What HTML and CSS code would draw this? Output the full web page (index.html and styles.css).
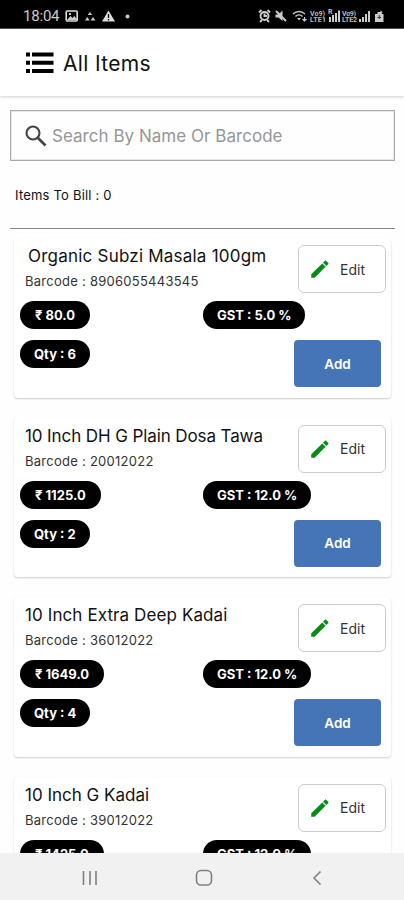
FILE: index.html
```
<!DOCTYPE html>
<html lang="en">
<head>
<meta charset="utf-8">
<title>All Items</title>
<link rel="stylesheet" href="styles.css">
</head>
<body>
<svg class="defs" aria-hidden="true">
  <symbol id="pencil" viewBox="0 0 20 20"><path d="M1.500 18.500v-3.300L12.300 4.800l3 3L4.700 18.500zM13.300 3.700l1.500-1.500c.5-.5 1-.5 1.500 0l1.600 1.600c.5.5.5 1 0 1.500l-1.500 1.500z" stroke="#078a16" stroke-width=".5" stroke-linejoin="round"/></symbol>
</svg>
<div class="phone">
  <div class="status">
    <span class="time">18:04</span>
    <svg class="left-icons" width="70" height="14" viewBox="0 0 70 14">
      <rect x="1.200" y="2" width="11" height="10" rx="1" fill="none" stroke="#ddd" stroke-width="1.600"/>
      <path d="M2 11l3.500-4 2 2 2-2 3 4zM4 4h2v2H4zM20 11.500l2.200-3.500 2.500 3.500zM22.700 6l2.200-3 2.200 3zM25.500 11.500L28 8l2.500 3.500z" fill="#ccc"/>
      <path d="M43.500 1.500l6.500 11H37z" fill="#ddd"/>
      <path d="M43.500 5v4M43.500 10v1.500" stroke="#111" stroke-width="1.300"/>
      <circle cx="62.500" cy="7.500" r="2" fill="#ccc"/>
    </svg>
    <svg class="right-icons" width="128" height="16" viewBox="0 0 128 16">
      <g fill="none" stroke="#ccc" stroke-width="1.900">
        <circle cx="6.500" cy="8" r="4"/><path d="M1 4.500L3.500 2M12 4.500L9.500 2M2 14l2-2M11 14l-2-2M6.500 5.500V8H9"/>
        <path d="M18 3l10 10"/>
        <path d="M35 6c3.500-3.300 8.500-3.300 12 0M37.500 8.500c2-2 5-2 7 0" stroke-width="1.500"/>
        <path d="M46.500 9v4M44.500 11l2 2 2-2" stroke-width="1.200"/>
      </g>
      <path d="M17.500 6.500h3l4-4V13l-4-3.500h-3zM39 10h4l-2 2.500zM71 9h2v5h-2zM74 7h2v7h-2zM77 5h2v9h-2zM80 2.500h2V14h-2zM101 11h2v3h-2zM104 9h2v5h-2zM107 6h2v8h-2zM110 3h2v11h-2z" fill="#ccc"/>
      <g class="tiny"><text x="52" y="7.500" textLength="15">Vo9)</text><text x="52" y="14" textLength="16">LTE1</text><text x="70" y="6">R</text><text x="84" y="7.500" textLength="14">Vo9)</text><text x="84" y="14" textLength="15">LTE2</text></g>
      <path d="M117 6h2.500V4h3V2.500l2 1.500-1 2h2v8H117z" fill="#ccc"/><path d="M121.300 7v4M119.500 9.500h3.500" stroke="#333"/>
    </svg>
  </div>
  <header class="appbar">
    <svg width="28" height="22" viewBox="0 0 28 22"><path d="M0 .5h4v4H0zM6 .5h21.500v4H6zM0 8.800h4v4H0zM6 8.800h21.500v4H6zM0 17h4v4H0zM6 17h21.500v4H6z"/></svg>
    <h1><span>All Items</span></h1>
  </header>
  <main>
    <div class="search">
      <svg width="22" height="22" viewBox="0 0 22 22" fill="none" stroke="#444"><circle cx="8" cy="8" r="6.500" stroke-width="2.100"/><path d="M12.500 12.500l8 8" stroke-width="2.600"/></svg>
      <span>Search By Name Or Barcode</span>
    </div>
    <p class="bill"><span>Items To Bill : 0</span></p>
    <section class="list">
      <article class="card">
        <div class="info"><h2 class="inset"><span>Organic Subzi Masala 100gm</span></h2><p class="code"><span>Barcode : 8906055443545</span></p></div>
        <button class="edit"><svg><use href="#pencil"/></svg><span>Edit</span></button>
        <div class="pills"><b>₹ 80.0</b><b class="gst">GST : 5.0 %</b></div>
        <div class="pills qty"><b>Qty : 6</b></div>
        <button class="add">Add</button>
      </article>
      <article class="card">
        <div class="info"><h2 class="tight"><span>10 Inch DH G Plain Dosa Tawa</span></h2><p class="code"><span>Barcode : 20012022</span></p></div>
        <button class="edit"><svg><use href="#pencil"/></svg><span>Edit</span></button>
        <div class="pills"><b>₹ 1125.0</b><b class="gst">GST : 12.0 %</b></div>
        <div class="pills qty"><b>Qty : 2</b></div>
        <button class="add">Add</button>
      </article>
      <article class="card">
        <div class="info"><h2 class="loose"><span>10 Inch Extra Deep Kadai</span></h2><p class="code"><span>Barcode : 36012022</span></p></div>
        <button class="edit"><svg><use href="#pencil"/></svg><span>Edit</span></button>
        <div class="pills"><b>₹ 1649.0</b><b class="gst">GST : 12.0 %</b></div>
        <div class="pills qty"><b>Qty : 4</b></div>
        <button class="add">Add</button>
      </article>
      <article class="card">
        <div class="info"><h2><span>10 Inch G Kadai</span></h2><p class="code"><span>Barcode : 39012022</span></p></div>
        <button class="edit"><svg><use href="#pencil"/></svg><span>Edit</span></button>
        <div class="pills"><b>₹ 1425.0</b><b class="gst">GST : 12.0 %</b></div>
      </article>
    </section>
  </main>
  <nav class="navbar">
    <svg width="16" height="16" viewBox="0 0 16 16"><path d="M1.500 1v14M8 1v14M14 1v14"/></svg>
    <svg width="18" height="18" viewBox="0 0 18 18"><rect x="1.500" y="1.500" width="15" height="14.500" rx="4.500"/></svg>
    <svg width="10" height="16" viewBox="0 0 10 16"><path d="M8.500 1.500L2 8l6.500 6.500"/></svg>
  </nav>
</div>
</body>
</html>
```
FILE: styles.css
```
* { box-sizing: border-box; }
body { margin: 0; background: #fff; font-family: Inter, "Noto Sans", sans-serif; color: #111; }
h1, h2, p { margin: 0; font-weight: 400; white-space: nowrap; }
.defs { display: none; }
.phone { height: 900px; display: flex; flex-direction: column; overflow: hidden; }

.status { flex: none; height: 29px; background: #000; border-bottom: 1px solid #555; display: flex; align-items: center; padding: 3px 18px 0 23px; color: #ccc; }
.time { width: 42px; font: 15px/20px Roboto, sans-serif; letter-spacing: -0.2px; }
.right-icons { margin-left: auto; }
.tiny { font: bold 7px Roboto, sans-serif; fill: #bbb; }

.appbar { flex: none; position: relative; height: 67px; background: #fff; display: flex; align-items: center; padding: 0 26px; gap: 9px; box-shadow: 0 1px 3px rgba(0, 0, 0, .18); }
.appbar h1 { font-size: 21px; line-height: 28px; letter-spacing: .35px; padding-top: 2px; }

main { flex: 1; min-height: 0; overflow: hidden; background: #fefefe; padding: 14px 9px 0 10px; }
.search { height: 51px; border: 1px solid #aaa; outline: 1px solid #e8e8e8; outline-offset: -2px; display: flex; align-items: center; gap: 5px; padding-left: 14px; color: #969696; font-size: 17px; letter-spacing: .03px; white-space: nowrap; }
.bill { height: 68px; border-bottom: 1px solid #888; padding: 24px 0 0 5px; font-size: 13px; line-height: 20px; letter-spacing: .2px; }

.list { display: flex; flex-direction: column; gap: 20px; padding: 9px 0 0 4px; }
.card { flex: none; width: 377px; height: 159.600px; background: #fff; border-radius: 4px; box-shadow: 0 1px 2px rgba(0, 0, 0, .2); display: grid; grid-template-columns: 280px 88px; grid-template-rows: 48px 28px 47px; row-gap: 8px; padding: 7px 0 0 4px; align-content: start; }
.info { padding-left: 7px; }
h2 { font-size: 17px; line-height: 22px; }
h2.inset { padding-left: 3px; letter-spacing: .22px; }
h2.tight { letter-spacing: -.1px; }
h2.loose { letter-spacing: .1px; }
.code { font-size: 13px; line-height: 20px; padding-top: 4px; color: #333; letter-spacing: .26px; }
.edit { font: 14px Inter, sans-serif; color: #333; background: #fff; border: 1px solid #ccc; border-radius: 6px; display: flex; align-items: center; padding: 0 0 0 11px; gap: 10px; }
.edit svg { width: 20px; height: 20px; fill: #078a16; }
.pills { display: grid; grid-template-columns: 183px auto; justify-items: start; grid-column: 1 / 3; margin-left: 2px; }
.pills b { height: 28px; border-radius: 14px; background: #000; color: #fff; padding: 1px 15px 0; font-size: 13px; line-height: 27px; font-weight: 700; white-space: nowrap; }
.pills .gst, .pills.qty b { padding: 1px 14px 0; }
.pills.qty { grid-column: 1; padding-top: 3px; }
.add { font: 600 13.500px Inter, sans-serif; color: #fff; background: #4675b7; border: 0; border-radius: 4px; width: 87px; height: 47px; margin: 3px 0 0 -4px; padding: 0; }

.navbar { flex: none; height: 47px; background: #f1f1f1; display: flex; justify-content: space-between; align-items: center; padding: 3px 82px 0 82px; }
.navbar svg { fill: none; stroke: #808080; stroke-width: 1.600; }
.navbar svg:nth-child(2) { margin-right: 3px; }
```
